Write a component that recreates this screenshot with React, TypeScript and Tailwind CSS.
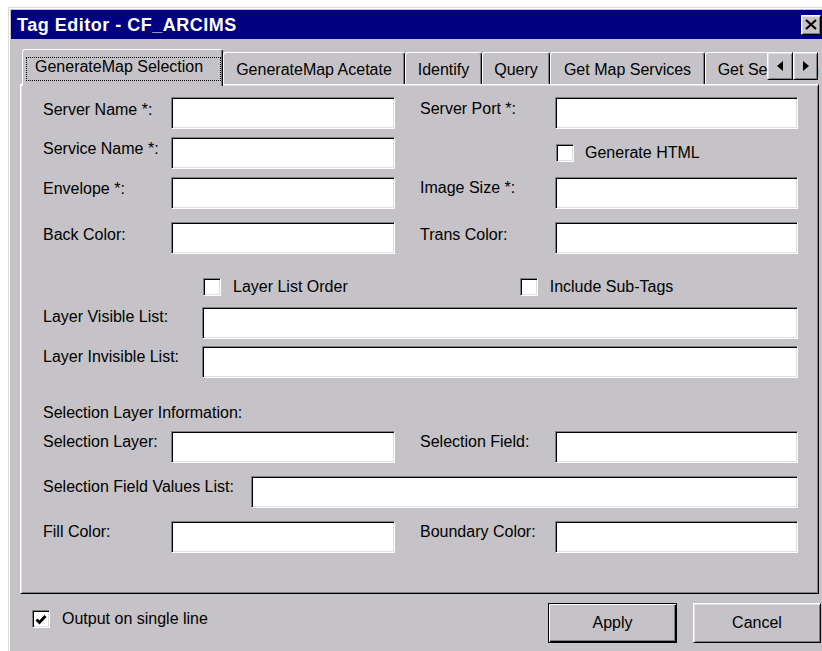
import React from "react";

const sunken =
  "bg-white border border-t-[#808080] border-l-[#808080] border-r-white border-b-white shadow-[inset_1px_1px_0_#000,inset_-1px_-1px_0_#dfdfdf]";

const raised =
  "bg-[#c5c3c7] border border-t-white border-l-white border-r-black border-b-black shadow-[inset_1px_1px_0_#dfdfdf,inset_-1px_-1px_0_#808080]";

function TextBox({ className }: { className: string }) {
  return <div className={`h-[32px] ${sunken} ${className}`} />;
}

function CheckBox({ checked = false }: { checked?: boolean }) {
  return (
    <div className={`w-[18px] h-[18px] shrink-0 flex items-center justify-center ${sunken}`}>
      {checked && (
        <svg width="12" height="11" viewBox="0 0 12 11">
          <path d="M1.5 5.5 L4.5 8.5 L10.5 2" fill="none" stroke="#000" strokeWidth="2.8" />
        </svg>
      )}
    </div>
  );
}

function Field({
  label,
  labelClass,
  inputClass,
}: {
  label: string;
  labelClass: string;
  inputClass: string;
}) {
  return (
    <div className="flex items-start">
      <span className={`whitespace-nowrap shrink-0 ${labelClass}`}>{label}</span>
      <TextBox className={inputClass} />
    </div>
  );
}

function Tab({ label, className }: { label: string; className: string }) {
  return (
    <div
      className={`h-[32px] mb-[2px] shrink-0 pt-[7px] text-center whitespace-nowrap rounded-t-[3px] border-t border-l border-r border-t-white border-l-white border-r-black shadow-[inset_-1px_0_0_#808080] bg-[#c5c3c7] ${className}`}
    >
      {label}
    </div>
  );
}

export default function App() {
  return (
    <div className="w-[822px] h-[651px] overflow-hidden bg-white pl-[8px] pt-[7px] font-['Liberation_Sans',Arial,sans-serif] text-black text-[16px] leading-[20px]">
      {/* dialog frame */}
      <div className="w-[818px] h-[660px] bg-[#c5c3c7] border border-[#dcdcdc] shadow-[inset_1px_1px_0_#fff] p-[2px]">
        {/* caption */}
        <div className="h-[29px] bg-[#000080] flex items-center pl-[6px] pr-[2px]">
          <span className="text-white font-bold text-[18px] leading-[22px] tracking-[0.5px]">
            Tag Editor - CF_ARCIMS
          </span>
          <div className={`ml-auto w-[20px] h-[20px] flex items-center justify-center ${raised}`}>
            <svg width="12" height="11" viewBox="0 0 12 11">
              <path d="M1 1 L11 10 M11 1 L1 10" stroke="#000" strokeWidth="2.2" />
            </svg>
          </div>
        </div>

        {/* tab strip */}
        <div className="relative z-10 ml-[9px] mt-[10px] w-[799px] h-[37px] flex items-end pl-[2px] overflow-hidden">
          <div className="relative h-[37px] w-[201px] shrink-0 pt-[7px] pl-[12px] whitespace-nowrap rounded-t-[3px] border-t border-l border-r border-t-white border-l-white border-r-black shadow-[inset_-1px_0_0_#808080] bg-[#c5c3c7]">
            GenerateMap Selection
            <div className="absolute left-[3px] right-[1px] top-[7px] bottom-[5px] border border-dotted border-black" />
          </div>
          <Tab label="GenerateMap Acetate" className="w-[182px]" />
          <Tab label="Identify" className="w-[77px]" />
          <Tab label="Query" className="w-[68px]" />
          <Tab label="Get Map Services" className="w-[155px]" />
          <Tab label="Get Service Info" className="w-[140px]" />
          {/* tab scroll arrows */}
          <div className="absolute right-[1px] top-[3px] flex">
            <div className={`w-[26px] h-[28px] flex items-center justify-center ${raised}`}>
              <svg width="6" height="10" viewBox="0 0 6 10">
                <path d="M6 0 L0 5 L6 10 Z" fill="#000" />
              </svg>
            </div>
            <div className={`w-[25px] h-[28px] flex items-center justify-center ${raised}`}>
              <svg width="6" height="10" viewBox="0 0 6 10">
                <path d="M0 0 L6 5 L0 10 Z" fill="#000" />
              </svg>
            </div>
          </div>
        </div>

        {/* tab page */}
        <div className="-mt-[2px] ml-[9px] w-[799px] h-[510px] border border-t-white border-l-white border-r-black border-b-black shadow-[inset_1px_1px_0_#dfdfdf,inset_-1px_-1px_0_#808080] pl-[22px]">
          <div className="mt-[12px] flex">
            <Field label="Server Name *:" labelClass="w-[128px] mt-[3px]" inputClass="w-[224px]" />
            <div className="ml-[25px]">
              <Field label="Server Port *:" labelClass="w-[135px] mt-[2px]" inputClass="w-[243px]" />
            </div>
          </div>

          <div className="mt-[8px] flex">
            <Field label="Service Name *:" labelClass="w-[128px] mt-[2px]" inputClass="w-[224px]" />
            <div className="ml-[161px] h-[32px] flex items-center">
              <CheckBox />
              <span className="ml-[11px] whitespace-nowrap">Generate HTML</span>
            </div>
          </div>

          <div className="mt-[8px] flex">
            <Field label="Envelope *:" labelClass="w-[128px] mt-[2px]" inputClass="w-[224px]" />
            <div className="ml-[25px]">
              <Field label="Image Size *:" labelClass="w-[135px] mt-[1px]" inputClass="w-[243px]" />
            </div>
          </div>

          <div className="mt-[13px] flex">
            <Field label="Back Color:" labelClass="w-[128px] mt-[3px]" inputClass="w-[224px]" />
            <div className="ml-[25px]">
              <Field label="Trans Color:" labelClass="w-[135px] mt-[3px]" inputClass="w-[243px]" />
            </div>
          </div>

          <div className="mt-[24px] h-[18px] flex items-center">
            <div className="ml-[160px] flex items-center">
              <CheckBox />
              <span className="ml-[12px] whitespace-nowrap">Layer List Order</span>
            </div>
            <div className="ml-[172px] flex items-center">
              <CheckBox />
              <span className="ml-[12px] whitespace-nowrap">Include Sub-Tags</span>
            </div>
          </div>

          <div className="mt-[11px]">
            <Field label="Layer Visible List:" labelClass="w-[159px]" inputClass="w-[596px]" />
          </div>
          <div className="mt-[7px]">
            <Field label="Layer Invisible List:" labelClass="w-[159px] mt-[1px]" inputClass="w-[596px]" />
          </div>

          <div className="mt-[25px] h-[20px] whitespace-nowrap">Selection Layer Information:</div>

          <div className="mt-[8px] flex">
            <Field label="Selection Layer:" labelClass="w-[128px] mt-[1px]" inputClass="w-[224px]" />
            <div className="ml-[25px]">
              <Field label="Selection Field:" labelClass="w-[135px] mt-[1px]" inputClass="w-[243px]" />
            </div>
          </div>

          <div className="mt-[13px]">
            <Field label="Selection Field Values List:" labelClass="w-[208px] mt-[1px]" inputClass="w-[547px]" />
          </div>

          <div className="mt-[13px] flex">
            <Field label="Fill Color:" labelClass="w-[128px] mt-[1px]" inputClass="w-[224px]" />
            <div className="ml-[25px]">
              <Field label="Boundary Color:" labelClass="w-[135px] mt-[1px]" inputClass="w-[243px]" />
            </div>
          </div>
        </div>

        {/* footer */}
        <div className="mt-[9px] ml-[21px] mr-[2px] flex items-start">
          <div className="mt-[6px] flex items-center">
            <CheckBox checked />
            <span className="ml-[12px] whitespace-nowrap">Output on single line</span>
          </div>
          <button className="ml-auto w-[129px] h-[40px] bg-[#c5c3c7] border border-black shadow-[inset_1px_1px_0_#fff,inset_-1px_-1px_0_#000,inset_-2px_-2px_0_#808080] flex items-center justify-center">
            Apply
          </button>
          <button className={`ml-[16px] w-[128px] h-[40px] flex items-center justify-center ${raised}`}>
            Cancel
          </button>
        </div>
      </div>
    </div>
  );
}
